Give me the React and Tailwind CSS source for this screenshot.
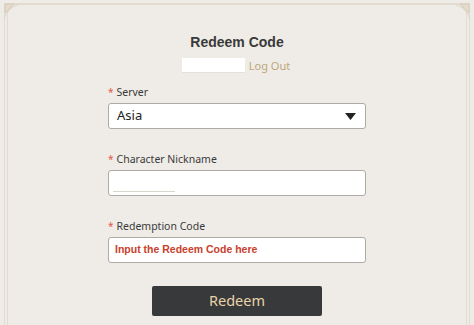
import React from 'react';

function Corner({ flip }) {
  return (
    <svg
      width="24"
      height="24"
      viewBox="0 0 24 24"
      className={`absolute top-0 ${flip ? 'right-0 -scale-x-100' : 'left-0'}`}
    >
      <path d="M5 4 L14 4 L5 13 Z" fill="#e4dbce" stroke="#d6cbba" strokeWidth="1" />
      <path d="M4 20 Q6 8 20 4" fill="none" stroke="#e0d8cb" strokeWidth="1.2" />
    </svg>
  );
}

function Label({ children, first }) {
  return (
    <div
      className={`w-[258px] ${first ? 'mt-[12px]' : 'mt-[23px]'} flex items-center h-[14px] text-[10.5px] leading-[14px] text-[#3a3a3a]`}
    >
      <span className="text-[#e05a48] mr-[3px] text-[10px]">*</span>
      {children}
    </div>
  );
}

export default function App() {
  return (
    <div
      className="w-[474px] h-[325px] overflow-hidden relative bg-[#efece7] pt-[3px] px-[4px]"
      style={{ fontFamily: '"Noto Sans", "Open Sans", sans-serif' }}
    >
      <Corner />
      <Corner flip />
      <div className="h-[330px] border-t-2 border-x-4 border-double border-[#e2dbd0] flex flex-col items-center">
        <h1 className="mt-[27px] text-[14px] leading-[20px] font-bold text-[#3a3a3a] font-['Liberation_Sans',sans-serif]">
          Redeem Code
        </h1>

        <div className="mt-[6px] flex items-center h-[15px] pr-[2px]">
          <div className="w-[63px] h-[15px] bg-white border-b border-[#e4e0da]" />
          <span className="ml-[4px] text-[11px] leading-[15px] text-[#bda77c]">Log Out</span>
        </div>

        <Label first>Server</Label>
        <div className="mt-[4px] w-[258px] h-[26px] bg-white border border-[#aeaba6] rounded-[3px] flex items-center justify-between pl-[8px] pr-[9px]">
          <span className="text-[13px] text-[#222]">Asia</span>
          <svg width="11" height="7" viewBox="0 0 11 7">
            <path d="M0 0 L11 0 L5.5 7 Z" fill="#222" />
          </svg>
        </div>

        <Label>Character Nickname</Label>
        <div className="mt-[4px] w-[258px] h-[26px] bg-white border border-[#aeaba6] rounded-[3px] flex items-center pl-[4px]">
          <div className="w-[62px] h-[18px] bg-white border-b border-[#d8d4ce]" />
        </div>

        <Label>Redemption Code</Label>
        <div className="mt-[4px] w-[258px] h-[26px] bg-white border border-[#aeaba6] rounded-[3px] flex items-center pl-[6px]">
          <span className="text-[10.5px] font-bold text-[#c8412c] font-['Liberation_Sans',sans-serif]">
            Input the Redeem Code here
          </span>
        </div>

        <button className="mt-[23px] w-[170px] h-[30px] bg-[#38393b] rounded-[2px] text-[14.5px] text-[#e8d5a8]">
          Redeem
        </button>
      </div>
    </div>
  );
}
